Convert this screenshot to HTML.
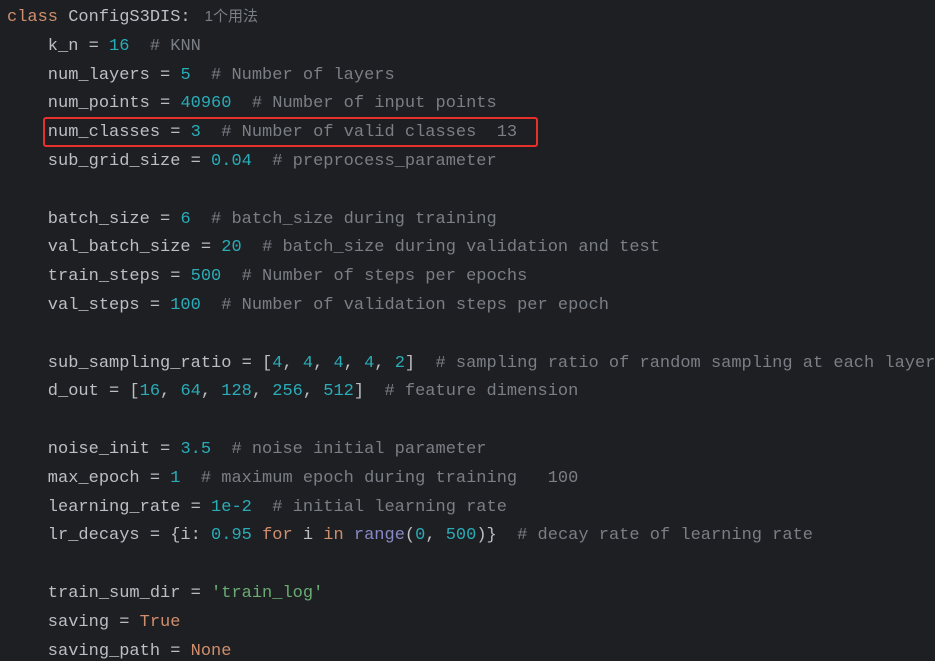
<!DOCTYPE html>
<html><head><meta charset="utf-8"><style>
html,body{margin:0;padding:0;background:#1e1f22;width:935px;height:661px;overflow:hidden}
pre{margin:0;padding:3px 0 0 7px;font-family:"Liberation Mono","Noto Sans CJK SC",monospace;font-size:17px;line-height:28.8px;color:#bcbec4;white-space:pre}
.k{color:#cf8e6d}.n{color:#2aacb8}.c{color:#7a7e85}.s{color:#6aab73}.b{color:#8888c6}
.h{color:#7a7e85;font-family:"Liberation Sans","Noto Sans CJK SC",sans-serif;font-size:15px;margin-left:14px}
.box{position:absolute;left:43px;top:117px;width:491px;height:26px;border:2px solid #e5312a;border-radius:3px}
</style></head><body>
<pre><span class="k">class</span> ConfigS3DIS:<span class="h">1个用法</span>
    k_n = <span class="n">16</span>  <span class="c"># KNN</span>
    num_layers = <span class="n">5</span>  <span class="c"># Number of layers</span>
    num_points = <span class="n">40960</span>  <span class="c"># Number of input points</span>
    num_classes = <span class="n">3</span>  <span class="c"># Number of valid classes  13</span>
    sub_grid_size = <span class="n">0.04</span>  <span class="c"># preprocess_parameter</span>

    batch_size = <span class="n">6</span>  <span class="c"># batch_size during training</span>
    val_batch_size = <span class="n">20</span>  <span class="c"># batch_size during validation and test</span>
    train_steps = <span class="n">500</span>  <span class="c"># Number of steps per epochs</span>
    val_steps = <span class="n">100</span>  <span class="c"># Number of validation steps per epoch</span>

    sub_sampling_ratio = [<span class="n">4</span>, <span class="n">4</span>, <span class="n">4</span>, <span class="n">4</span>, <span class="n">2</span>]  <span class="c"># sampling ratio of random sampling at each layer</span>
    d_out = [<span class="n">16</span>, <span class="n">64</span>, <span class="n">128</span>, <span class="n">256</span>, <span class="n">512</span>]  <span class="c"># feature dimension</span>

    noise_init = <span class="n">3.5</span>  <span class="c"># noise initial parameter</span>
    max_epoch = <span class="n">1</span>  <span class="c"># maximum epoch during training   100</span>
    learning_rate = <span class="n">1e-2</span>  <span class="c"># initial learning rate</span>
    lr_decays = {i: <span class="n">0.95</span> <span class="k">for</span> i <span class="k">in</span> <span class="b">range</span>(<span class="n">0</span>, <span class="n">500</span>)}  <span class="c"># decay rate of learning rate</span>

    train_sum_dir = <span class="s">'train_log'</span>
    saving = <span class="k">True</span>
    saving_path = <span class="k">None</span></pre>
<div class="box"></div>
</body></html>
